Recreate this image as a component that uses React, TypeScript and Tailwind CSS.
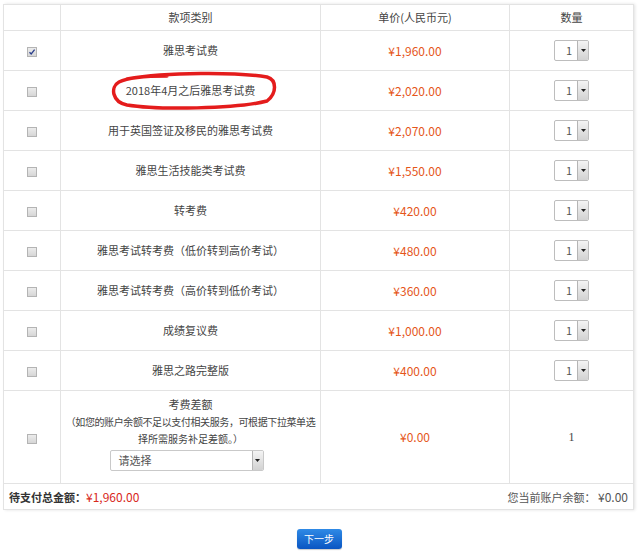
import React from 'react';

interface FeeItem {
  name: string;
  price: string;
  checked?: boolean;
}

const items: FeeItem[] = [
  { name: '雅思考试费', price: '¥1,960.00', checked: true },
  { name: '2018年4月之后雅思考试费', price: '¥2,020.00' },
  { name: '用于英国签证及移民的雅思考试费', price: '¥2,070.00' },
  { name: '雅思生活技能类考试费', price: '¥1,550.00' },
  { name: '转考费', price: '¥420.00' },
  { name: '雅思考试转考费（低价转到高价考试）', price: '¥480.00' },
  { name: '雅思考试转考费（高价转到低价考试）', price: '¥360.00' },
  { name: '成绩复议费', price: '¥1,000.00' },
  { name: '雅思之路完整版', price: '¥400.00' },
];

const Checkbox: React.FC<{ checked?: boolean }> = ({ checked }) => (
  <span className="inline-flex items-center justify-center w-[10px] h-[10px] border border-[#b4b4b4] bg-gradient-to-b from-[#ececec] to-[#d6d6d6] align-middle">
    {checked && (
      <svg width="8" height="8" viewBox="0 0 8 8">
        <path d="M1.5 4.2 L3.2 6 L6.6 1.6" fill="none" stroke="#2b3f8c" strokeWidth="1.3" />
      </svg>
    )}
  </span>
);

const Arrow: React.FC = () => (
  <span className="flex items-center justify-center w-[11px] h-full border-l border-[#b5b5b5] bg-gradient-to-b from-[#f4f4f4] to-[#d2d2d2]">
    <svg width="5" height="3" viewBox="0 0 5 3">
      <path d="M0 0 L5 0 L2.5 3 Z" fill="#222" />
    </svg>
  </span>
);

const QtySelect: React.FC = () => (
  <span className="inline-flex items-stretch w-[35px] h-[21px] border border-[#bdbdbd] rounded-[2px] bg-white overflow-hidden align-middle">
    <span className="flex-1 pl-[6px] text-[11px] leading-[19px] text-[#555]">1</span>
    <Arrow />
  </span>
);

export default function App() {
  return (
    <div className="w-[638px] h-[555px] bg-white pt-[4px] pl-[3px] font-['Noto_Sans_CJK_SC','Liberation_Sans',sans-serif] text-[11px] text-[#444]">
      <div className="relative w-[630px] shadow-[2px_0_3px_rgba(0,0,0,0.12)]">
        <table className="w-[630px] border-collapse table-fixed">
          <colgroup>
            <col className="w-[57px]" />
            <col className="w-[260px]" />
            <col className="w-[189px]" />
            <col className="w-[124px]" />
          </colgroup>
          <thead>
            <tr className="h-[26px]">
              <th className="border border-[#e3e3e3] font-normal" />
              <th className="border border-[#e3e3e3] font-normal">款项类别</th>
              <th className="border border-[#e3e3e3] font-normal">单价(人民币元)</th>
              <th className="border border-[#e3e3e3] font-normal">数量</th>
            </tr>
          </thead>
          <tbody>
            {items.map((it) => (
              <tr key={it.name} className="h-[40px]">
                <td className="border border-[#e3e3e3] text-center">
                  <Checkbox checked={it.checked} />
                </td>
                <td className="border border-[#e3e3e3] text-center">{it.name}</td>
                <td className="border border-[#e3e3e3] text-center text-[12px] text-[#e5561a]">{it.price}</td>
                <td className="border border-[#e3e3e3] text-center">
                  <QtySelect />
                </td>
              </tr>
            ))}
            <tr className="h-[93px]">
              <td className="border border-[#e3e3e3] text-center">
                <Checkbox />
              </td>
              <td className="border border-[#e3e3e3] text-center leading-[17px] pb-[8px]">
                <div>考费差额</div>
                <div className="whitespace-nowrap text-[10px] tracking-[-0.4px]">（如您的账户余额不足以支付相关服务，可根据下拉菜单选</div>
                <div className="text-[10px]">择所需服务补足差额。）</div>
                <div className="flex justify-center mt-[3px] pr-[8px]">
                  <span className="inline-flex items-stretch w-[154px] h-[21px] border border-[#c9c9c9] rounded-[2px] bg-white overflow-hidden">
                    <span className="flex-1 pl-[8px] text-left text-[11px] leading-[19px] text-[#555]">请选择</span>
                    <Arrow />
                  </span>
                </div>
              </td>
              <td className="border border-[#e3e3e3] text-center text-[12px] text-[#e5561a]">¥0.00</td>
              <td className="border border-[#e3e3e3] text-center text-[12px] font-['Liberation_Serif',serif] text-[#444]">1</td>
            </tr>
            <tr className="h-[26px]">
              <td colSpan={4} className="border border-[#e3e3e3] px-[5px]">
                <div className="flex justify-between items-center">
                  <span className="font-bold text-[#333]">
                    待支付总金额：<span className="text-[12px] font-normal text-[#d8281c]">¥1,960.00</span>
                  </span>
                  <span className="text-[#555]">
                    您当前账户余额： <span className="text-[12px]">¥0.00</span>
                  </span>
                </div>
              </td>
            </tr>
          </tbody>
        </table>
        <svg
          className="absolute left-[104px] top-[67px] pointer-events-none"
          width="172"
          height="40"
          viewBox="0 0 172 40"
        >
          <path
            d="M20 8 C60 1 130 1 160 6 C170 9 170 22 160 30 C130 38 50 39 20 34 C5 31 3 16 12 11 C20 7 40 5 60 5"
            fill="none"
            stroke="#e41c1c"
            strokeWidth="3.5"
            strokeLinecap="round"
          />
        </svg>
      </div>
      <div className="flex justify-center mt-[19px] pr-[3px]">
        <button className="w-[45px] h-[20px] rounded-[3px] bg-gradient-to-b from-[#2f8ae6] to-[#0a55c2] text-white text-[10px] leading-[20px] shadow-[0_1px_1px_rgba(0,0,0,0.2)]">
          下一步
        </button>
      </div>
    </div>
  );
}
